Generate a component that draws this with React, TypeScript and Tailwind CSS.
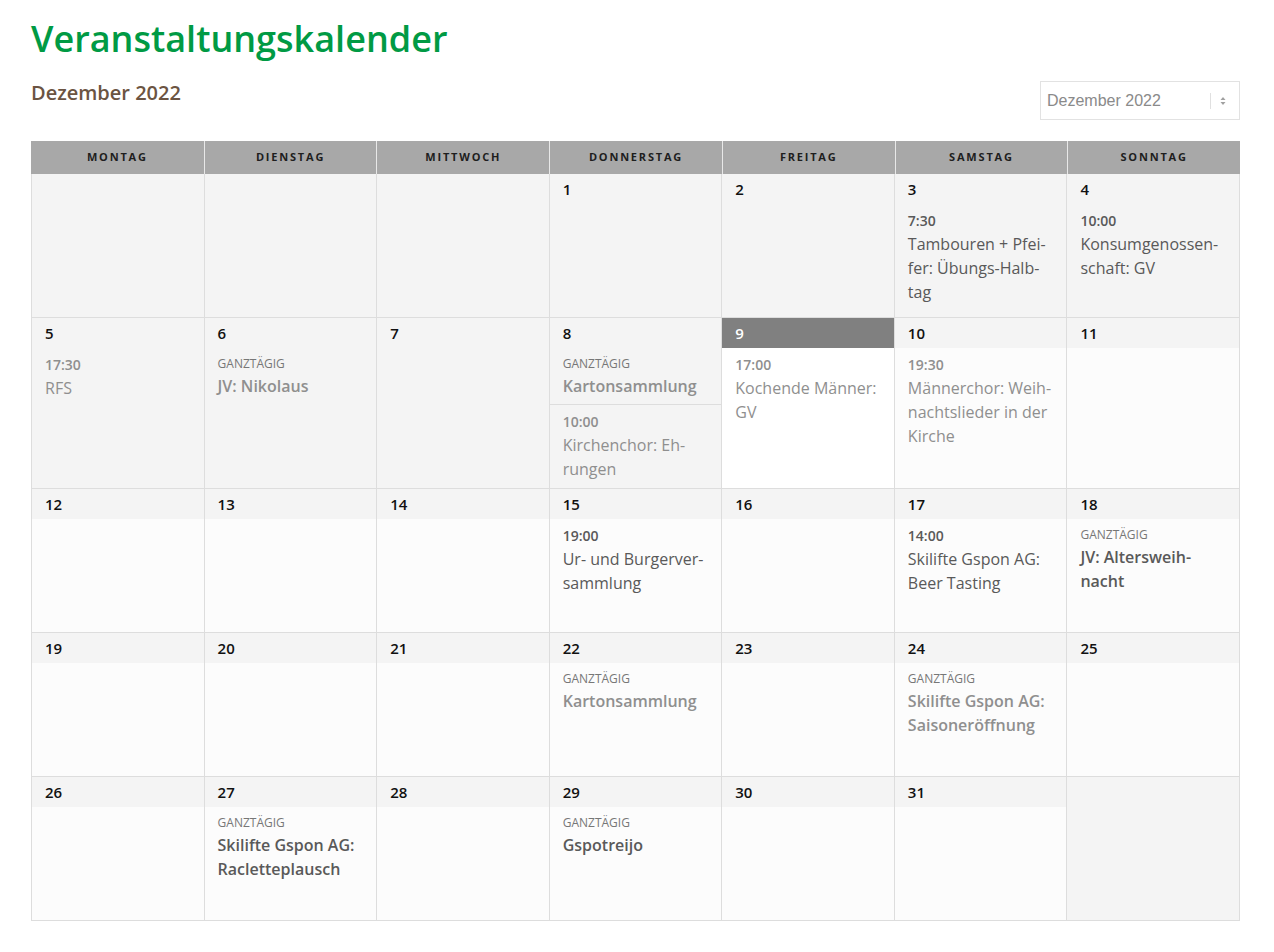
type Ev = { time?: string; allDay?: boolean; lines: string[]; light?: boolean };
type Day = { n?: number; state: "past" | "today" | "future" | "empty"; events?: Ev[] };

const weekdays = ["Montag", "Dienstag", "Mittwoch", "Donnerstag", "Freitag", "Samstag", "Sonntag"];

const weeks: { h: string; days: Day[] }[] = [
  {
    h: "h-[144px]",
    days: [
      { state: "empty" },
      { state: "empty" },
      { state: "empty" },
      { n: 1, state: "past" },
      { n: 2, state: "past" },
      { n: 3, state: "past", events: [{ time: "7:30", lines: ["Tambouren + Pfei-", "fer: Übungs-Halb-", "tag"] }] },
      { n: 4, state: "past", events: [{ time: "10:00", lines: ["Konsumgenossen-", "schaft: GV"] }] },
    ],
  },
  {
    h: "h-[171px]",
    days: [
      { n: 5, state: "past", events: [{ time: "17:30", lines: ["RFS"], light: true }] },
      { n: 6, state: "past", events: [{ allDay: true, lines: ["JV: Nikolaus"], light: true }] },
      { n: 7, state: "past" },
      {
        n: 8,
        state: "past",
        events: [
          { allDay: true, lines: ["Kartonsammlung"], light: true },
          { time: "10:00", lines: ["Kirchenchor: Eh-", "rungen"], light: true },
        ],
      },
      { n: 9, state: "today", events: [{ time: "17:00", lines: ["Kochende Männer:", "GV"], light: true }] },
      { n: 10, state: "future", events: [{ time: "19:30", lines: ["Männerchor: Weih-", "nachtslieder in der", "Kirche"], light: true }] },
      { n: 11, state: "future" },
    ],
  },
  {
    h: "h-[144px]",
    days: [
      { n: 12, state: "future" },
      { n: 13, state: "future" },
      { n: 14, state: "future" },
      { n: 15, state: "future", events: [{ time: "19:00", lines: ["Ur- und Burgerver-", "sammlung"] }] },
      { n: 16, state: "future" },
      { n: 17, state: "future", events: [{ time: "14:00", lines: ["Skilifte Gspon AG:", "Beer Tasting"] }] },
      { n: 18, state: "future", events: [{ allDay: true, lines: ["JV: Altersweih-", "nacht"] }] },
    ],
  },
  {
    h: "h-[144px]",
    days: [
      { n: 19, state: "future" },
      { n: 20, state: "future" },
      { n: 21, state: "future" },
      { n: 22, state: "future", events: [{ allDay: true, lines: ["Kartonsammlung"], light: true }] },
      { n: 23, state: "future" },
      { n: 24, state: "future", events: [{ allDay: true, lines: ["Skilifte Gspon AG:", "Saisoneröffnung"], light: true }] },
      { n: 25, state: "future" },
    ],
  },
  {
    h: "h-[144px]",
    days: [
      { n: 26, state: "future" },
      { n: 27, state: "future", events: [{ allDay: true, lines: ["Skilifte Gspon AG:", "Racletteplausch"] }] },
      { n: 28, state: "future" },
      { n: 29, state: "future", events: [{ allDay: true, lines: ["Gspotreijo"] }] },
      { n: 30, state: "future" },
      { n: 31, state: "future" },
      { state: "empty" },
    ],
  },
];

function Event({ ev }: { ev: Ev }) {
  const color = ev.light ? "text-[#8f8f8f]" : "text-[#595959]";
  return (
    <div className="px-[13px] pt-[6px] pb-[6px]">
      {ev.allDay ? (
        <div className="text-[12px] leading-[20px] uppercase text-[#777]">Ganztägig</div>
      ) : (
        <div className={`text-[14px] leading-[22px] font-semibold ${color}`}>{ev.time}</div>
      )}
      <div className={`text-[16px] leading-[24px] ${ev.allDay ? "font-semibold" : ""} ${color}`}>
        {ev.lines.map((l, i) => (
          <div key={i}>{l}</div>
        ))}
      </div>
    </div>
  );
}

function Cell({ day }: { day: Day }) {
  if (day.state === "empty") {
    return <div className="bg-[#f4f4f4] border-r border-b border-[#dddddd]" />;
  }
  const bodyBg = day.state === "past" ? "bg-[#f4f4f4]" : day.state === "today" ? "bg-white" : "bg-[#fcfcfc]";
  const stripBg = day.state === "today" ? "bg-[#808080] text-white" : "bg-[#f4f4f4] text-[#111]";
  return (
    <div className={`flex flex-col border-r border-b border-[#dddddd] ${bodyBg}`}>
      <div className={`h-[30px] px-[13px] flex items-center text-[15px] font-semibold ${stripBg}`}>{day.n}</div>
      {day.events?.map((ev, i) => (
        <div key={i} className={i > 0 ? "border-t border-[#dddddd]" : ""}>
          <Event ev={ev} />
        </div>
      ))}
    </div>
  );
}

export default function App() {
  return (
    <div className="min-h-screen bg-white font-['Open_Sans',sans-serif] px-[31px] pt-[14px]">
      <h1 className="text-[36px] leading-[50px] font-semibold text-[#009a44]">Veranstaltungskalender</h1>

      <div className="flex justify-between items-start mt-[17px] w-[1209px]">
        <h2 className="text-[20px] leading-[26px] font-semibold text-[#6b5442] mt-[-1px]">Dezember 2022</h2>
        <div className="w-[200px] h-[39px] border border-[#e2e2e2] bg-white flex items-center pl-[6px] pr-[10px]">
          <span className="flex-1 text-[16px] text-[#8a8a8a] font-['Liberation_Sans',sans-serif]">Dezember 2022</span>
          <span className="w-px h-[16px] bg-[#e0e0e0] mr-[8px]" />
          <svg width="8" height="10" viewBox="0 0 8 10" className="mr-[2px]">
            <path d="M4 1 L6.5 4 L1.5 4 Z" fill="#a0a0a0" />
            <path d="M4 9 L6.5 6 L1.5 6 Z" fill="#a0a0a0" />
          </svg>
        </div>
      </div>

      <div className="mt-[21px] w-[1209px]">
        <div className="grid grid-cols-7 bg-[#a8a8a8] h-[33px]">
          {weekdays.map((w) => (
            <div
              key={w}
              className="flex items-center justify-center border-l border-[#e8e8e8] first:border-l-0 text-[11px] font-bold uppercase tracking-[1.8px] text-[#1e1e1e]"
            >
              {w}
            </div>
          ))}
        </div>
        <div className="border-l border-[#dddddd]">
          {weeks.map((wk, i) => (
            <div key={i} className={`grid grid-cols-7 ${wk.h}`}>
              {wk.days.map((d, j) => (
                <Cell key={j} day={d} />
              ))}
            </div>
          ))}
        </div>
      </div>
    </div>
  );
}
